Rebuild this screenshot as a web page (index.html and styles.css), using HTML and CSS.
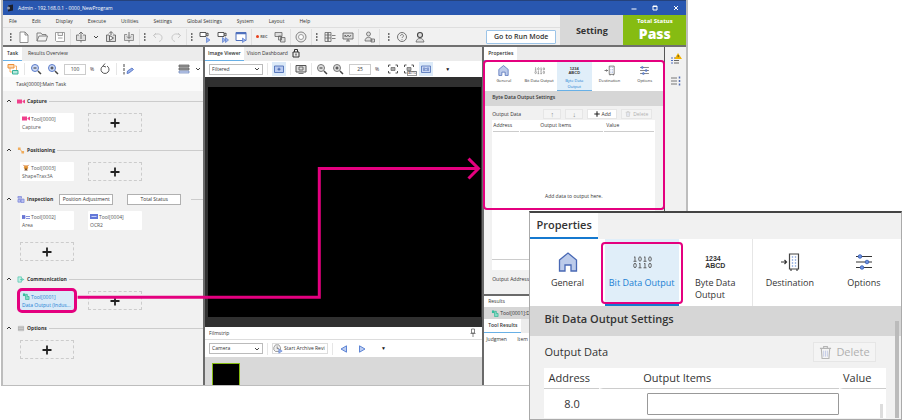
FILE: index.html
```
<!DOCTYPE html>
<html lang="en">
    <head>
        <meta charset="UTF-8" />
        <meta name="viewport" content="width=device-width, initial-scale=1.0" />
        <title>Admin - 192.168.0.1 - 0000_NewProgram</title>
        <link rel="stylesheet" href="styles.css">
    </head>
    <body>
        <svg class="sprite" aria-hidden="true">
            <symbol id="grip" viewBox="0 0 2 12"><path d="M0 3h1.5M0 6h1.5M0 9h1.5" stroke="#444" stroke-width="1.3"/></symbol>
            <symbol id="chev" viewBox="0 0 6 6"><path d="M1 2l2 2 2-2" fill="none" stroke="#444"/></symbol>
            <symbol id="chev-up" viewBox="0 0 6 6"><path d="M1 4l2-2 2 2" fill="none" stroke="#333"/></symbol>
            <symbol id="new" viewBox="0 0 12 12"><path d="M2 1h5l3 3v7.500H2zM7 1v3h3" fill="#fff" stroke="#777" stroke-width=".8"/></symbol>
            <symbol id="open" viewBox="0 0 12 12"><path d="M1 10V2h4l1 1.500h4V5M1 10l2-5h8.500l-1.500 5z" fill="none" stroke="#777" stroke-width=".9"/></symbol>
            <symbol id="save" viewBox="0 0 12 12"><path d="M1.500 1.500h9v9h-8l-1-1zM4 1.500v3h4.500v-3M4 7h4.500" fill="#fff" stroke="#888" stroke-width=".8"/></symbol>
            <symbol id="upload" viewBox="0 0 12 12"><path d="M4 4H1.500v5.500h9V4H8" fill="#ddd" stroke="#777" stroke-width=".9"/><path d="M6 8V1.500M4 3l2-2 2 2M6 9.500v2" fill="none" stroke="#666" stroke-width=".9"/></symbol>
            <symbol id="transfer" viewBox="0 0 12 12"><path d="M4 4H1.500v6.500h9V4H8" fill="#ddd" stroke="#666" stroke-width=".9"/><path d="M4 2.500L6 .5l2 2M6 1v3M4.500 4.500v5L8.500 7z" fill="#fff" stroke="#555" stroke-width=".9"/></symbol>
            <symbol id="download" viewBox="0 0 12 12"><path d="M4 3.500H1.500v6h9v-6H8" fill="#ddd" stroke="#888" stroke-width=".9"/><path d="M6 1v6M4 5.500l2 2 2-2M6 9.500v2" fill="none" stroke="#666" stroke-width=".9"/></symbol>
            <symbol id="undo" viewBox="0 0 12 12"><path d="M4 2L1.500 4.500 4 7M1.500 4.500C6 1 10.500 4 10 7c0 2-1.500 3-3 3.500" fill="none" stroke="#c4c4c4" stroke-width=".9"/></symbol>
            <symbol id="redo" viewBox="0 0 12 12"><path d="M8 2l2.500 2.500L8 7M10.500 4.500C6 1 1.500 4 2 7c0 2 1.500 3 3 3.500" fill="none" stroke="#c4c4c4" stroke-width=".9"/></symbol>
            <symbol id="cam-play" viewBox="0 0 12 12"><path d="M1 1.500h6v4H1zM7 3l2-1v3L7 4" fill="#fff" stroke="#444" stroke-width=".9"/><path d="M7.500 6.500v5l3.500-2.500z" fill="#9ab2ea" stroke="#5b7fd0" stroke-width=".7"/></symbol>
            <symbol id="cam-loop" viewBox="0 0 12 12"><path d="M1 1.500h6v4H1zM7 3l2-1v3L7 4" fill="#fff" stroke="#444" stroke-width=".9"/><path d="M5.500 6.500v5l3-2.500zM8.500 6.500v5l3-2.500z" fill="#9ab2ea" stroke="#5b7fd0" stroke-width=".7"/></symbol>
            <symbol id="win-play" viewBox="0 0 12 12"><path d="M1 1.500h10v8H1z" fill="#fff" stroke="#4f70bd"/><path d="M1 2.500h10" stroke="#4f70bd" stroke-width="1.500"/><path d="M7.500 7v4.500l3-2.200z" fill="#9ab2ea" stroke="#5b7fd0" stroke-width=".7"/></symbol>
            <symbol id="copywin" viewBox="0 0 12 12"><path d="M1 1.500h7v4H1zM4.500 5h3v4h-3zM6.500 6.500h4.500v4.500H6.500z" fill="#ddd" stroke="#666" stroke-width=".8"/></symbol>
            <symbol id="target" viewBox="0 0 12 12"><circle cx="6" cy="6" r="5" fill="#eee" stroke="#777" stroke-width=".9"/><circle cx="6" cy="6" r="2.500" fill="#fff" stroke="#888" stroke-width=".8"/></symbol>
            <symbol id="iolist" viewBox="0 0 12 12"><path d="M1 1.500h3v9H1zM4 1.500h3v9H4z" fill="#eee" stroke="#666" stroke-width=".8"/><path d="M1 4h6M1 7h6M8 4.500h3.500M8 7.500h3.500" stroke="#666" stroke-width=".8"/></symbol>
            <symbol id="monitor" viewBox="0 0 12 12"><path d="M1 2h10v6H1z" fill="#ddd" stroke="#666" stroke-width=".9"/><path d="M3 6V4l1.500 2L6 4l1.500 2L9 4M4 10h4M6 8v2" fill="none" stroke="#555" stroke-width=".8"/></symbol>
            <symbol id="user" viewBox="0 0 12 12"><circle cx="5.500" cy="3" r="2" fill="#ddd" stroke="#666" stroke-width=".8"/><path d="M2 10c0-5 7-5 7 0zM8 8h3.500v3H8z" fill="#ddd" stroke="#666" stroke-width=".8"/></symbol>
            <symbol id="help" viewBox="0 0 12 12"><circle cx="6" cy="6" r="4.500" fill="#eee" stroke="#666" stroke-width=".9"/><path d="M4.500 5c0-2 3-2 3 0 0 1-1.500 1-1.500 2M6 8v.8" fill="none" stroke="#666" stroke-width=".8"/></symbol>
            <symbol id="support" viewBox="0 0 12 12"><circle cx="6" cy="4" r="2.500" fill="#ddd" stroke="#444" stroke-width="1.100"/><path d="M2 11c1-5 7-5 8 0z" fill="#ddd" stroke="#666" stroke-width=".8"/></symbol>
            <symbol id="flow" viewBox="0 0 12 12"><path d="M1 1.500h6V5H1z" fill="#fbd9b4" stroke="#ef8f35"/><path d="M5.500 7.500H11V11H5.500z" fill="#b4e8dd" stroke="#38b39a"/><path d="M3 5v4h2M8 3h1.500v4" fill="none" stroke="#ef8f35" stroke-width=".7"/></symbol>
            <symbol id="zoom-out" viewBox="0 0 12 12"><circle cx="5" cy="5" r="3.500" fill="var(--lens)" stroke="var(--rim)"/><path d="M3.500 5h3" stroke="#333"/><path d="M8 8l3 3" stroke="#444" stroke-width="1.500"/></symbol>
            <symbol id="zoom-in" viewBox="0 0 12 12"><circle cx="5" cy="5" r="3.500" fill="var(--lens)" stroke="var(--rim)"/><path d="M3.500 5h3M5 3.500v3" stroke="#333"/><path d="M8 8l3 3" stroke="#444" stroke-width="1.500"/></symbol>
            <symbol id="reset" viewBox="0 0 12 12"><path d="M4 3a4 4 0 1 0 4 0M6 .5L4 3l3 1" fill="none" stroke="#444" stroke-width=".9"/></symbol>
            <symbol id="edit" viewBox="0 0 12 12"><path d="M2 1v3M2 5v3M2 9v2.500" stroke="#444"/><path d="M5 10.500l.5-2.500 4.500-3 1.500 1.500L7 10z" fill="#9ab2ea" stroke="#4a6bc0" stroke-width=".8"/></symbol>
            <symbol id="rows" viewBox="0 0 12 12"><path d="M1 2h10v2H1zM1 5h10v2H1z" fill="#999" stroke="#666" stroke-width=".8"/><path d="M1 8h10v2H1z" fill="#ccd8f4" stroke="#667fb5" stroke-width=".7"/></symbol>
            <symbol id="frame" viewBox="0 0 12 12"><path d="M1.500 3h9v6.500h-9z" fill="#b9caef" stroke="#4e70b8" stroke-width=".9"/><path d="M4.500 6.200h3M6 4.700v3" stroke="#3e61ad"/></symbol>
            <symbol id="display" viewBox="0 0 12 12"><path d="M1 2.500h10v6.500H1z" fill="#ddd" stroke="#555"/><path d="M4 4h4v3H4zM3.500 10.500h5" fill="none" stroke="#555" stroke-width=".8"/></symbol>
            <symbol id="fit" viewBox="0 0 12 12"><path d="M1.500 4V2h2M8.500 2h2v2M10.500 8v2h-2M3.500 10h-2V8" fill="none" stroke="#555"/><path d="M4 4.500h4v3H4z" fill="#aaa" stroke="#666" stroke-width=".7"/></symbol>
            <symbol id="onetoone" viewBox="0 0 12 12"><path d="M1.500 3h9v6.500h-9z" fill="#c9d7f4" stroke="#4e70b8" stroke-width=".8"/><path d="M4 4.500v3.500M6 5v1M6 6.800v1M8 4.500v3.500" stroke="#3e61ad"/></symbol>
            <symbol id="lock" viewBox="0 0 8 10"><path d="M1 4h6v5H1zM2.500 4V1.500h3V4M4 5.500v2" fill="none" stroke="#333"/></symbol>
            <symbol id="pin" viewBox="0 0 6 10"><path d="M1.500 1h3v4h-3zM.5 5.500h5M3 5.500V9" fill="none" stroke="#555" stroke-width=".7"/></symbol>
            <symbol id="camera" viewBox="0 0 8 6"><path d="M0 1h5v4H0zM5.500 2.500L8 1v4L5.500 3.500z" fill="#f0408c"/></symbol>
            <symbol id="position" viewBox="0 0 8 8"><path d="M1.500 1.500l5 5" stroke="#e9a04c"/><path d="M.5 .5h3v3h-3zM4.500 4.500h3v3h-3z" fill="#f0ac5c"/></symbol>
            <symbol id="shape" viewBox="0 0 8 8"><path d="M1 1l2 2M7 1L5 3" stroke="#c25a2a"/><circle cx="4" cy="4" r="2.500" fill="#e79a3f"/><path d="M2 7.500L4 4l2 3.500z" fill="#7d542a"/></symbol>
            <symbol id="inspect" viewBox="0 0 8 8"><path d="M.5 .5h4v2h-4zM.5 4h3v3h-3zM4 3.500h3.500v4H4z" fill="#b9bff0" stroke="#6976d4" stroke-width=".7"/></symbol>
            <symbol id="area" viewBox="0 0 8 6"><path d="M0 2h3v3H0zM4 3h4M4 5h4" fill="#6976d4" stroke="#6976d4" stroke-width=".8"/></symbol>
            <symbol id="ocr" viewBox="0 0 8 6"><path d="M0 .5h8v5H0z" fill="#6478d8"/><path d="M1.500 3h5" stroke="#c6d0fa"/></symbol>
            <symbol id="comm" viewBox="0 0 8 8"><path d="M.5 1h4v6h-4z" fill="#c1eee4" stroke="#3cc0a4" stroke-width=".7"/><path d="M3 4h4M5.500 2.500L7 4 5.500 5.500" fill="none" stroke="#3cc0a4" stroke-width=".8"/></symbol>
            <symbol id="output" viewBox="0 0 8 8"><path d="M.5 .5h2.500v3H.5z" fill="#35bd9d"/><path d="M3.500 1.500h2v2.500h2v3.500h-4z" fill="#81dcc6" stroke="#2fb191" stroke-width=".8"/></symbol>
            <symbol id="list" viewBox="0 0 8 8"><path d="M1 1.500h6v5H1z" fill="#ddd" stroke="#aaa" stroke-width=".7"/><path d="M1 3.200h6M1 5h6" stroke="#888" stroke-width=".6"/></symbol>
            <symbol id="plus" viewBox="0 0 10 10"><path d="M5 .5v9M.5 5h9" stroke="#222" stroke-width="1.800"/></symbol>
            <symbol id="trash" viewBox="0 0 14 16"><path d="M1 3.500h12M5 3V1.500h4V3M2.500 4l.8 10.500h7.400L11.500 4" fill="none" stroke="#b5b5b5" stroke-width="1.200"/><path d="M5 6v6.500M7 6v6.500M9 6v6.500" stroke="#c4cbe6"/></symbol>
            <symbol id="home" viewBox="0 0 20 20"><path d="M1.500 8L10 1l8.500 7v11H13v-6H7v6H1.500z" fill="#bccbea" stroke="#4868b4" stroke-width="1.300"/></symbol>
            <symbol id="bits" viewBox="0 0 20 20"><g fill="none" stroke="#555" stroke-width=".9"><path d="M2 5.500l1-.8v4.600M1.500 9.300h3M12 5.500l1-.8v4.600M11.500 9.300h3"/><ellipse cx="8" cy="7" rx="1.300" ry="2.200"/><ellipse cx="18" cy="7" rx="1.300" ry="2.200"/><ellipse cx="3" cy="13.500" rx="1.300" ry="2.200"/><path d="M7 12l1-.8v4.600M6.500 15.800h3M12 12l1-.8v4.600M11.500 15.800h3"/><ellipse cx="18" cy="13.500" rx="1.300" ry="2.200"/></g></symbol>
            <symbol id="dest" viewBox="0 0 20 20"><path d="M1 10h5.500M4.500 8l2 2-2 2" fill="none" stroke="#333" stroke-width="1.200"/><path d="M9.500 2h9v15h-9zM11 17v2M17 17v2" fill="#fff" stroke="#444" stroke-width="1.200"/><path d="M12.500 4.500v10M15.500 4.500v10" stroke="#4b76cb" stroke-dasharray="1 2" stroke-width="1.300"/></symbol>
            <symbol id="sliders" viewBox="0 0 20 20"><path d="M2 4.500h16M2 10h16M2 15.500h16" stroke="#333" stroke-width="1.100"/><g fill="#6f92e0" stroke="#3159b4" stroke-width=".8"><circle cx="6" cy="4.500" r="1.800"/><circle cx="13" cy="10" r="1.800"/><circle cx="8" cy="15.500" r="1.800"/></g></symbol>
            <symbol id="alert" viewBox="0 0 12 12"><path d="M1 5h2M1 7.500h2M1 10h2" stroke="#4e6fc0"/><path d="M4 5h7M4 7.500h5M4 10h5" stroke="#666"/><path d="M8 0l4 6H4.500z" fill="#f4b400"/><path d="M8.200 2v2.200" stroke="#333" stroke-width=".8"/></symbol>
            <symbol id="steps" viewBox="0 0 12 12"><path d="M1 3h6M1 6h6M1 9h6" stroke="#777"/><path d="M9.500 1.500v2M9.500 5v2M9.500 8.500v2" stroke="#5570b5" stroke-width="1.500"/></symbol>
            <symbol id="archive" viewBox="0 0 12 12"><path d="M1 4l2-3h4l2 3v3l-2 2H3L1 7z" fill="#eee" stroke="#777" stroke-width=".8"/><path d="M5 3v2.500h2" fill="none" stroke="#555" stroke-width=".8"/><path d="M7 6v5l4-2.500z" fill="#9ab2ea" stroke="#5b7fd0" stroke-width=".7"/></symbol>
            <symbol id="prev" viewBox="0 0 8 8"><path d="M6.500 .8v6.400L1 4z" fill="#bccdf2" stroke="#4f79d0" stroke-width=".9"/></symbol>
            <symbol id="next" viewBox="0 0 8 8"><path d="M1.500 .8v6.400L7 4z" fill="#bccdf2" stroke="#4f79d0" stroke-width=".9"/></symbol>
        </svg>

        <main class="figure">
            <section class="app">
                <header class="titlebar">
                    <svg class="logo" viewBox="0 0 8 8"><path d="M2 1.500l5-1v6l-5 1z" fill="#1c1f2b"/><circle cx="2.500" cy="4" r="1.500" fill="#8b93a8"/></svg>
                    <span>Admin - 192.168.0.1 - 0000_NewProgram</span>
                    <div class="window-buttons">
                        <svg viewBox="0 0 6 6"><path d="M.5 4h5" stroke="#fff"/></svg>
                        <svg viewBox="0 0 6 6"><path d="M1 1h4v4H1zM1 1.500h4" fill="none" stroke="#fff"/></svg>
                        <svg viewBox="0 0 6 6"><path d="M1 1l4 4M5 1L1 5" stroke="#fff"/></svg>
                    </div>
                </header>

                <div class="top">
                    <div class="top-bars">
                        <nav class="menu">
                            <a href="#">File</a>
                            <a href="#">Edit</a>
                            <a href="#">Display</a>
                            <a href="#">Execute</a>
                            <a href="#">Utilities</a>
                            <a href="#">Settings</a>
                            <a href="#">Global Settings</a>
                            <a href="#">System</a>
                            <a href="#">Layout</a>
                            <a href="#">Help</a>
                        </nav>
                        <div class="toolbar">
                            <div class="group">
                                <svg class="grip"><use href="#grip"/></svg>
                                <button class="icon" aria-label="New"><svg><use href="#new"/></svg></button>
                                <button class="icon" aria-label="Open"><svg><use href="#open"/></svg></button>
                                <button class="icon" aria-label="Save"><svg><use href="#save"/></svg></button>
                            </div>
                            <div class="group">
                                <button class="icon" aria-label="Upload"><svg><use href="#upload"/></svg></button>
                                <svg class="chev"><use href="#chev"/></svg>
                                <button class="icon" aria-label="Transfer"><svg><use href="#transfer"/></svg></button>
                                <button class="icon" aria-label="Download"><svg><use href="#download"/></svg></button>
                            </div>
                            <div class="group">
                                <svg class="grip"><use href="#grip"/></svg>
                                <button class="icon" aria-label="Undo"><svg><use href="#undo"/></svg></button>
                                <button class="icon" aria-label="Redo"><svg><use href="#redo"/></svg></button>
                            </div>
                            <div class="group">
                                <svg class="grip"><use href="#grip"/></svg>
                                <button class="icon" aria-label="Trigger"><svg><use href="#cam-play"/></svg></button>
                                <button class="icon" aria-label="Continuous trigger"><svg><use href="#cam-loop"/></svg></button>
                                <button class="icon" aria-label="Rerun"><svg><use href="#win-play"/></svg></button>
                            </div>
                            <div class="group">
                                <button class="icon rec">REC</button>
                                <button class="icon" aria-label="Windows"><svg><use href="#copywin"/></svg></button>
                            </div>
                            <div class="group">
                                <button class="icon" aria-label="Focus"><svg><use href="#target"/></svg></button>
                            </div>
                            <div class="group">
                                <svg class="grip"><use href="#grip"/></svg>
                                <button class="icon" aria-label="I/O"><svg><use href="#iolist"/></svg></button>
                                <button class="icon" aria-label="Monitor"><svg><use href="#monitor"/></svg></button>
                            </div>
                            <div class="group">
                                <button class="icon" aria-label="User"><svg><use href="#user"/></svg></button>
                            </div>
                            <div class="group last">
                                <svg class="grip"><use href="#grip"/></svg>
                                <button class="icon" aria-label="Help"><svg><use href="#help"/></svg></button>
                                <button class="icon" aria-label="Support"><svg><use href="#support"/></svg></button>
                            </div>
                            <button class="run-mode">Go to Run Mode</button>
                        </div>
                    </div>
                    <div class="mode">Setting</div>
                    <div class="status">
                        <span>Total Status</span>
                        <strong>Pass</strong>
                    </div>
                </div>

                <div class="workspace">
                    <section class="task-pane">
                        <div class="tabs">
                            <button class="tab active">Task</button>
                            <button class="tab">Results Overview</button>
                        </div>
                        <div class="pane-bar blue-lens">
                            <button class="icon" aria-label="Flow"><svg><use href="#flow"/></svg></button>
                            <i class="sep"></i>
                            <button class="icon" aria-label="Zoom out"><svg><use href="#zoom-out"/></svg></button>
                            <button class="icon" aria-label="Zoom in"><svg><use href="#zoom-in"/></svg></button>
                            <label class="percent"><input type="text" value="100" />%</label>
                            <button class="icon" aria-label="Reset"><svg><use href="#reset"/></svg></button>
                            <i class="sep"></i>
                            <button class="icon" aria-label="Edit order"><svg><use href="#edit"/></svg></button>
                            <button class="icon push" aria-label="View"><svg><use href="#rows"/></svg></button>
                            <svg class="chev"><use href="#chev"/></svg>
                        </div>
                        <div class="crumb">Task[0000]:Main Task</div>
                        <div class="sections">
                            <section class="section">
                                <h3><svg class="chev"><use href="#chev-up"/></svg><svg class="mini"><use href="#camera"/></svg>Capture</h3>
                                <div class="cards">
                                    <div class="card"><span><svg class="mini"><use href="#camera"/></svg>Tool[0000]</span><span>Capture</span></div>
                                    <button class="add" aria-label="Add capture tool"><svg><use href="#plus"/></svg></button>
                                </div>
                            </section>
                            <section class="section">
                                <h3><svg class="chev"><use href="#chev-up"/></svg><svg class="mini"><use href="#position"/></svg>Positioning</h3>
                                <div class="cards">
                                    <div class="card"><span><svg class="mini"><use href="#shape"/></svg>Tool[0003]</span><span>ShapeTrax3A</span></div>
                                    <button class="add" aria-label="Add positioning tool"><svg><use href="#plus"/></svg></button>
                                </div>
                            </section>
                            <section class="section">
                                <h3><svg class="chev"><use href="#chev-up"/></svg><svg class="mini"><use href="#inspect"/></svg>Inspection
                                    <button>Position Adjustment</button><button>Total Status</button></h3>
                                <div class="cards">
                                    <div class="card"><span><svg class="mini"><use href="#area"/></svg>Tool[0002]</span><span>Area</span></div>
                                    <div class="card"><span><svg class="mini"><use href="#ocr"/></svg>Tool[0004]</span><span>OCR2</span></div>
                                    <button class="add" aria-label="Add inspection tool"><svg><use href="#plus"/></svg></button>
                                </div>
                            </section>
                            <section class="section">
                                <h3><svg class="chev"><use href="#chev-up"/></svg><svg class="mini"><use href="#comm"/></svg>Communication</h3>
                                <div class="cards">
                                    <div class="card selected"><span><svg class="mini"><use href="#output"/></svg>Tool[0001]</span><span>Data Output (Indus...</span></div>
                                    <button class="add" aria-label="Add communication tool"><svg><use href="#plus"/></svg></button>
                                </div>
                            </section>
                            <section class="section">
                                <h3><svg class="chev"><use href="#chev-up"/></svg><svg class="mini"><use href="#list"/></svg>Options</h3>
                                <div class="cards">
                                    <button class="add" aria-label="Add option"><svg><use href="#plus"/></svg></button>
                                </div>
                            </section>
                        </div>
                    </section>

                    <section class="image-pane">
                        <div class="tabs">
                            <button class="tab active">Image Viewer</button>
                            <button class="tab">Vision Dashboard</button>
                            <svg class="lock"><use href="#lock"/></svg>
                        </div>
                        <div class="pane-bar">
                            <div class="select">
                                <select aria-label="Image type"><option>Filtered</option></select>
                                <svg class="chev"><use href="#chev"/></svg>
                            </div>
                            <i class="sep"></i>
                            <button class="icon on" aria-label="Overlay"><svg><use href="#frame"/></svg></button>
                            <i class="sep"></i>
                            <button class="icon" aria-label="Display"><svg><use href="#display"/></svg></button>
                            <i class="sep"></i>
                            <button class="icon" aria-label="Zoom out"><svg><use href="#zoom-out"/></svg></button>
                            <button class="icon" aria-label="Zoom in"><svg><use href="#zoom-in"/></svg></button>
                            <label class="percent"><input type="text" value="25" />%</label>
                            <button class="icon" aria-label="Fit"><svg><use href="#fit"/></svg></button>
                            <button class="icon auto" aria-label="Auto fit"><svg><use href="#fit"/></svg><small>AUTO</small></button>
                            <button class="icon on" aria-label="Actual size"><svg><use href="#onetoone"/></svg></button>
                            <span class="more">▼</span>
                        </div>
                        <div class="viewer"><div class="image"></div></div>
                        <div class="filmstrip-title">Filmstrip<svg class="pin"><use href="#pin"/></svg></div>
                        <div class="pane-bar film-bar">
                            <div class="select">
                                <select aria-label="Source"><option>Camera</option></select>
                                <svg class="chev"><use href="#chev"/></svg>
                            </div>
                            <i class="sep"></i>
                            <button class="archive"><svg><use href="#archive"/></svg>Start Archive Revi</button>
                            <i class="sep"></i>
                            <button class="icon step" aria-label="Previous"><svg><use href="#prev"/></svg></button>
                            <button class="icon step" aria-label="Next"><svg><use href="#next"/></svg></button>
                            <span class="more">▼</span>
                        </div>
                        <div class="filmstrip"><div class="thumb"></div></div>
                    </section>

                    <section class="side-pane">
                        <div class="tabs">
                            <button class="tab active">Properties</button>
                        </div>
                        <div class="props framed">
                            <div class="prop-tabs">
                                <button><svg><use href="#home"/></svg><span>General</span></button>
                                <button><svg><use href="#bits"/></svg><span>Bit Data Output</span></button>
                                <button class="active"><b class="glyph">1234<br>ABCD</b><span>Byte Data<br>Output</span></button>
                                <button><svg><use href="#dest"/></svg><span>Destination</span></button>
                                <button><svg><use href="#sliders"/></svg><span>Options</span></button>
                            </div>
                            <h2>Byte Data Output Settings</h2>
                            <div class="data-bar">
                                <span>Output Data</span>
                                <button class="move" disabled>↑</button>
                                <button class="move" disabled>↓</button>
                                <button class="add-row"><svg><use href="#plus"/></svg>Add</button>
                                <button disabled><svg><use href="#trash"/></svg>Delete</button>
                            </div>
                            <table>
                                <thead>
                                    <tr><th>Address</th><th>Output Items</th><th>Value</th></tr>
                                </thead>
                            </table>
                            <p class="empty">Add data to output here.</p>
                        </div>
                        <div class="props-rest"></div>
                        <div class="output-address">Output Address</div>
                        <div class="results">
                            <h4>Results</h4>
                            <div class="result-tool"><svg class="mini"><use href="#output"/></svg>Tool[0001]:D</div>
                            <div class="tabs"><button class="tab active">Tool Results</button></div>
                            <div class="result-head"><span>Judgmen</span><span>Item</span></div>
                        </div>
                    </section>

                    <aside class="rail">
                        <button class="icon" aria-label="Warnings"><svg><use href="#alert"/></svg></button>
                        <button class="icon" aria-label="Steps"><svg><use href="#steps"/></svg></button>
                    </aside>
                </div>

                <!-- callout from the selected tool to its properties -->
                <svg class="arrow" viewBox="0 0 687 386" preserveAspectRatio="none"><path d="M75 298H318V169H478M468 159l10 10-10 10"/></svg>
            </section>

            <section class="detail">
                <div class="detail-tabs"><button>Properties</button></div>
                <div class="prop-tabs">
                    <button><svg><use href="#home"/></svg><span>General</span></button>
                    <button class="active callout"><svg><use href="#bits"/></svg><span>Bit Data Output</span></button>
                    <button class="divided"><b class="glyph">1234<br>ABCD</b><span>Byte Data<br>Output</span></button>
                    <button><svg><use href="#dest"/></svg><span>Destination</span></button>
                    <button><svg><use href="#sliders"/></svg><span>Options</span></button>
                </div>
                <h2>Bit Data Output Settings</h2>
                <div class="detail-body">
                    <div class="data-bar">
                        <span>Output Data</span>
                        <button disabled><svg><use href="#trash"/></svg>Delete</button>
                    </div>
                    <table>
                        <thead>
                            <tr><th>Address</th><th>Output Items</th><th>Value</th></tr>
                        </thead>
                        <tbody>
                            <tr><td>8.0</td><td><input type="text" aria-label="Output item 8.0" /></td><td></td></tr>
                        </tbody>
                    </table>
                </div>
            </section>
        </main>
    </body>
</html>
```
FILE: styles.css
```
* {
    box-sizing: border-box;
}
body {
    margin: 0;
    background: #fff;
    color: #333;
    font-family: "Open Sans", "Noto Sans", sans-serif;
    font-size: 5px;
    line-height: 7px;
}
button,
input,
select {
    margin: 0;
    padding: 0;
    border: 0;
    background: none;
    color: inherit;
    font: inherit;
}
a {
    color: inherit;
    text-decoration: none;
}
h2,
h3,
h4,
p {
    margin: 0;
    font-size: inherit;
    font-weight: 600;
}
svg {
    display: block;
    flex: none;
}
.sprite {
    position: absolute;
    width: 0;
    height: 0;
}
.figure {
    position: relative;
    min-height: 100vh;
    overflow: hidden;
}

/* application window */
.app {
    position: relative;
    width: 76.2%;
    margin-left: 1px;
    border: solid #bdbdbd;
    border-width: 0 2px 1px;
    background: #f1f1f1;
}
.titlebar {
    display: flex;
    align-items: center;
    gap: 4px;
    height: 15px;
    padding: 0 7px 0 3px;
    border-top: 1px solid #25427c;
    background: #2957b0;
    color: #fff;
}
.logo {
    width: 8px;
    height: 8px;
}
.window-buttons {
    display: flex;
    gap: 15px;
    margin-left: auto;
}
.window-buttons svg {
    width: 6px;
    height: 6px;
}
.top {
    display: flex;
    height: 32px;
    border-bottom: 2px solid #707070;
}
.top-bars {
    flex: 1;
}
.menu {
    display: flex;
    align-items: center;
    gap: 15px;
    height: 13px;
    padding-left: 6px;
    border-bottom: 1px solid #dedede;
}
.toolbar {
    display: flex;
    align-items: center;
    height: 17px;
    padding: 0 4px 0 3px;
}
.group {
    display: flex;
    align-items: center;
    gap: 6px;
    height: 16px;
    padding: 0 4px;
    border-right: 1px solid #e0e0e0;
}
.group.last {
    padding-left: 8px;
    border: 0;
}
.icon {
    display: grid;
    place-items: center;
    width: 12px;
    height: 12px;
}
.icon svg {
    width: 12px;
    height: 12px;
}
.grip {
    width: 2px;
    height: 12px;
}
.chev {
    width: 6px;
    height: 6px;
}
.rec {
    color: #666;
    font-size: 4px;
    font-weight: 700;
    grid-auto-flow: column;
}
.rec::before {
    content: "";
    width: 3px;
    height: 3px;
    border-radius: 50%;
    background: #e8401c;
}
.run-mode {
    height: 14px;
    margin-left: auto;
    padding: 0 7px;
    border: 1px solid #9cc4e8;
    border-radius: 1px;
    background: #fff;
    font-size: 7px;
    font-weight: 600;
}
.mode,
.status {
    display: flex;
    flex-direction: column;
    align-items: center;
    justify-content: center;
    width: 63px;
}
.mode {
    background: #d8d8d8;
    font-size: 9px;
    font-weight: 700;
}
.status {
    background: #86bc12;
    color: #fff;
    font-size: 6px;
    font-weight: 700;
}
.status strong {
    font-size: 14px;
    line-height: 18px;
}

/* panes */
.workspace {
    display: grid;
    grid-template-columns: 200fr 281fr 180fr 22fr;
}
.tabs {
    display: flex;
    height: 14px;
    background: #ececec;
}
.tab {
    padding: 0 4px;
    border-bottom: 1px solid transparent;
}
.tab.active {
    border-color: #68b0e6;
    background: #fff;
    font-weight: 600;
}
.pane-bar {
    --lens: #ddd;
    --rim: #777;
    display: flex;
    align-items: center;
    gap: 4px;
    height: 16px;
    padding: 0 4px;
    background: #fff;
}
.blue-lens {
    --lens: #ccd9f5;
    --rim: #5c7dca;
    gap: 5px;
}
.sep {
    width: 1px;
    height: 12px;
    background: #e6e6e6;
}
.percent {
    display: flex;
    align-items: center;
    gap: 4px;
}
.image-pane .percent {
    margin: 0 4px 0 1px;
}
.percent input {
    width: 22px;
    height: 11px;
    border: 1px solid #ccc;
    text-align: center;
}
.push {
    margin-left: auto;
}
.more {
    margin-left: 8px;
    color: #111;
}
.select {
    display: flex;
    align-items: center;
    width: 54px;
    height: 11px;
    border: 1px solid #bbb;
    background: #fff;
}
.select select {
    flex: 1;
    appearance: none;
    padding-left: 2px;
}
.select .chev {
    margin-right: 2px;
}
.icon.on {
    width: 14px;
    height: 14px;
    background: #dceaf8;
}

.task-pane .tab + .tab {
    padding-left: 6px;
}
.task-pane .pane-bar {
    padding-right: 2px;
}
.crumb {
    height: 14px;
    padding: 4px 13px;
    background: #fafafa;
}
.sections {
    padding: 4px 0 14px 3px;
}
.section {
    margin-bottom: 12px;
}
.section h3 {
    display: flex;
    align-items: center;
    gap: 2px;
    height: 12px;
    margin-bottom: 6px;
    font-weight: 700;
}
.section h3::after {
    content: "";
    flex: 1;
    height: 1px;
    background: #ccc;
}
.section h3 .chev {
    margin-right: 3px;
}
.section h3 button {
    width: 54px;
    height: 11px;
    margin: 0 8px 0 4px;
    border: 1px solid #b0b0b0;
    background: #fff;
    font-weight: 400;
    white-space: nowrap;
}
.mini {
    width: 8px;
    height: 7px;
}
.cards {
    display: grid;
    grid-template-columns: 54px 54px;
    gap: 12px 14px;
    margin-left: 14px;
}
.card {
    display: flex;
    flex-direction: column;
    justify-content: center;
    height: 19px;
    padding: 0 2px;
    border-radius: 1px;
    background: #fff;
    color: #555;
    line-height: 8px;
    white-space: nowrap;
}
.card span {
    display: flex;
    align-items: center;
    gap: 1px;
}
.card.selected {
    background: #d9eaf8;
    color: #1b7fd4;
    outline: 3px solid #e4007f;
    border-radius: 2px;
}
.add {
    display: grid;
    place-items: center;
    height: 19px;
    border: 1px dashed #ccc;
}
.add svg {
    width: 10px;
    height: 10px;
}

.image-pane {
    display: flex;
    flex-direction: column;
    border: solid #6a6a6a;
    border-width: 0 2px;
    min-width: 0;
}
.image-pane .tab {
    padding: 0 3px;
}
.lock {
    width: 8px;
    height: 10px;
    margin: 1px 0 0 1px;
}
.auto {
    position: relative;
}
.auto small {
    position: absolute;
    right: -2px;
    bottom: -1px;
    border: 1px solid #999;
    background: #fff;
    font-size: 3px;
    line-height: 3px;
}
.viewer {
    display: flex;
    flex: 1;
    padding: 10px 1px 10px 3px;
    background: #303030;
}
.image {
    flex: 1;
    background: #000;
}
.filmstrip-title {
    display: flex;
    align-items: center;
    justify-content: space-between;
    height: 13px;
    padding: 0 6px 0 4px;
    border-bottom: 1px solid #ddd;
    background: #fff;
}
.pin {
    width: 6px;
    height: 10px;
}
.film-bar {
    height: 17px;
}
.archive {
    display: flex;
    align-items: center;
    gap: 1px;
    min-width: 56px;
    height: 11px;
    border: 1px solid #ddd;
    white-space: nowrap;
}
.archive svg {
    width: 10px;
    height: 10px;
}
.step {
    width: 14px;
}
.step svg {
    width: 8px;
    height: 8px;
}
.filmstrip {
    height: 28px;
    padding: 6px 7px 0;
    background: #d9d9d9;
}
.thumb {
    width: 28px;
    height: 22px;
    border: 1px solid #86bc12;
    border-bottom: 0;
    background: #000;
}

/* properties */
.side-pane {
    display: flex;
    flex-direction: column;
    min-width: 0;
}
.props {
    position: relative;
    height: 149px;
    background: #f1f1f1;
}
.framed::after {
    content: "";
    position: absolute;
    inset: -1px -1px 0;
    border: 2px solid #e4007f;
    border-radius: 4px;
}
.prop-tabs {
    display: grid;
    grid-template-columns: repeat(5, 1fr);
    background: #fff;
}
.prop-tabs button {
    display: flex;
    flex-direction: column;
    align-items: center;
}
.prop-tabs .active {
    border-bottom: 1px solid #68b0e6;
    background: #e0eef9;
    color: #1b7fd4;
}
.glyph {
    display: grid;
    place-content: center;
    color: #333;
    font-family: "Liberation Sans", sans-serif;
}
.props .prop-tabs {
    height: 30px;
    padding: 0 2px;
}
.props .prop-tabs button {
    padding-top: 4px;
    font-size: 4px;
    line-height: 6px;
}
.props .prop-tabs svg,
.props .glyph {
    width: 11px;
    height: 11px;
    margin-bottom: 2px;
}
.props .glyph {
    font-size: 4px;
    line-height: 4px;
}
.props h2 {
    height: 15px;
    padding: 3px 8px;
    background: #d6d6d6;
}
.data-bar {
    display: flex;
    align-items: center;
}
.data-bar span {
    margin-right: auto;
}
.data-bar button {
    display: flex;
    align-items: center;
    justify-content: center;
    border: 1px solid #e6e6e6;
    background: #f4f4f4;
}
.data-bar button:disabled {
    color: #b0b0b0;
}
.data-bar .move:disabled {
    color: #888;
    font-size: 7px;
}
.props .data-bar {
    gap: 4px;
    height: 14px;
    padding: 2px 12px 0 8px;
}
.props .data-bar button {
    gap: 2px;
    min-width: 18px;
    height: 10px;
    padding: 0 3px;
}
.props .data-bar svg {
    width: 6px;
    height: 6px;
}
.props .data-bar .add-row {
    min-width: 30px;
    background: #fff;
}
table {
    border-collapse: separate;
    background: #fff;
    table-layout: fixed;
}
th {
    padding: 0;
    border-bottom: 1px solid #ccc;
    font-weight: 400;
}
.props table {
    width: calc(100% - 17px);
    margin-left: 8px;
    border-spacing: 1px 0;
}
.props th {
    height: 12px;
}
.props th:first-child {
    width: 26px;
    text-align: left;
}
.props th:nth-child(2) {
    padding-right: 12px;
}
.props th:last-child {
    width: 50px;
    padding-left: 2px;
    text-align: left;
}
.empty {
    height: 78px;
    margin: 0 9px 0 8px;
    padding-top: 61px;
    background: #fff;
    font-weight: 400;
    text-align: center;
}
.props-rest {
    flex: 1;
    margin: 0 9px 0 8px;
    background: linear-gradient(#ccc, #ccc) 0 calc(100% - 10px) / 100% 1px no-repeat #fff;
}
.output-address {
    height: 24px;
    padding: 6px 8px;
}
.results {
    height: 91px;
    border-top: 2px solid #6a6a6a;
    background: #fff;
}
.results h4 {
    height: 11px;
    padding: 2px 4px;
    font-weight: 400;
}
.result-tool {
    display: flex;
    align-items: center;
    gap: 1px;
    height: 12px;
    padding-left: 7px;
    background: #d6d6d6;
}
.result-head {
    display: flex;
    gap: 8px;
    padding: 3px 2px;
}
.result-head span:first-child {
    min-width: 23px;
}
.rail {
    display: flex;
    flex-direction: column;
    align-items: center;
    gap: 10px;
    padding-top: 6px;
    border-left: 1px solid #555;
}
.arrow {
    position: absolute;
    inset: 0;
    width: 100%;
    height: 100%;
    fill: none;
    stroke: #e4007f;
    stroke-width: 3;
}

/* enlarged properties window */
.detail {
    position: absolute;
    right: 0;
    bottom: 0;
    width: 41.3%;
    height: 209px;
    overflow: hidden;
    border: 1px solid #aaa;
    border-top: 2px solid #444;
    background: #f1f1f1;
    font-size: 11px;
    line-height: 14px;
}
.detail-tabs {
    display: flex;
    height: 26px;
}
.detail-tabs button {
    padding: 0 6px;
    border-bottom: 2px solid #1579cf;
    background: #fff;
    font-weight: 600;
}
.detail .prop-tabs {
    height: 67px;
}
.detail .prop-tabs button {
    position: relative;
    padding-top: 13px;
    font-size: 9px;
    line-height: 12px;
    text-align: left;
}
.detail .prop-tabs svg,
.detail .glyph {
    width: 20px;
    height: 20px;
    margin-bottom: 5px;
}
.detail .glyph {
    font-size: 7px;
    line-height: 7px;
}
.detail .prop-tabs .active {
    border-bottom: 2px solid #1579cf;
}
.detail .divided {
    border-right: 1px solid #e6e6e6;
}
.callout::after {
    content: "";
    position: absolute;
    inset: 3px -4px 0;
    border: 2px solid #e4007f;
    border-radius: 4px;
}
.detail h2 {
    height: 30px;
    padding: 6px 14px;
    background: #d6d6d6;
}
.detail-body {
    position: relative;
    padding: 0 15px 0 14px;
}
.detail-body::before,
.detail-body::after {
    content: "";
    position: absolute;
    background: #bbb;
}
.detail-body::before {
    top: -15px;
    right: 2px;
    bottom: 0;
    width: 4px;
}
.detail-body::after {
    right: 18px;
    bottom: 0;
    width: 3px;
    height: 14px;
    background: #ddd;
}
.detail .data-bar {
    height: 32px;
    padding-right: 10px;
}
.detail .data-bar button {
    gap: 4px;
    width: 63px;
    height: 20px;
}
.detail .data-bar svg {
    width: 13px;
    height: 15px;
}
.detail table {
    width: 100%;
    border-spacing: 0;
}
.detail th {
    height: 21px;
}
.detail th:first-child {
    width: 55px;
    padding-left: 4px;
    text-align: left;
}
.detail th:nth-child(2) {
    border-left: 4px solid #fff;
    padding-right: 88px;
}
.detail th:last-child {
    width: 47px;
    border-left: 4px solid #fff;
    text-align: left;
}
.detail td {
    height: 29px;
    padding: 0;
    text-align: center;
    vertical-align: middle;
}
.detail td input {
    display: block;
    width: calc(100% - 48px);
    height: 22px;
    margin-left: auto;
    border: 1px solid #999;
    border-radius: 1px;
    background: #fff;
}
```
